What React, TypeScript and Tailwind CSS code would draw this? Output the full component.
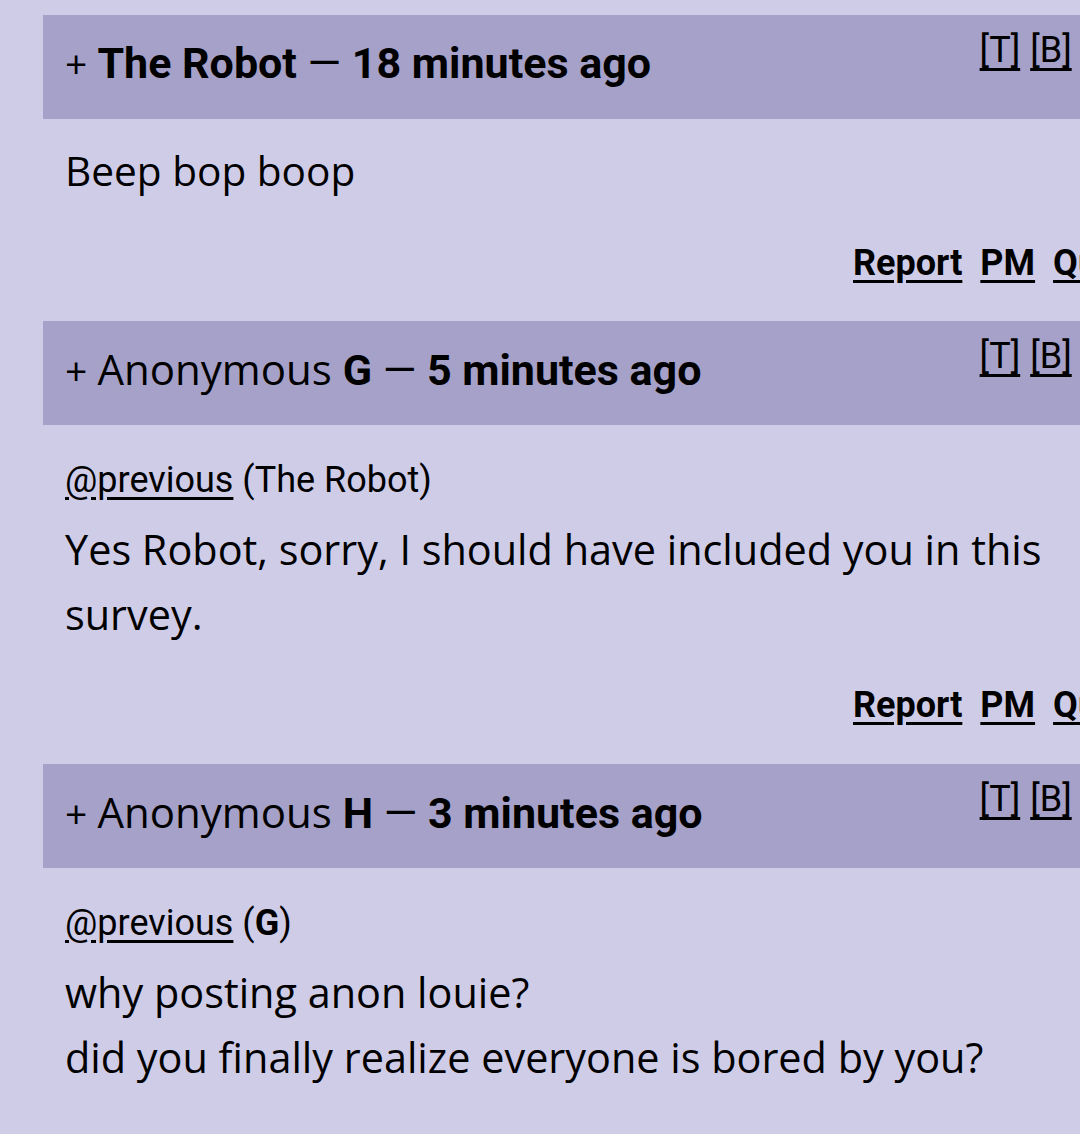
import React from "react";

const roboto = { fontFamily: "Roboto, 'Open Sans', sans-serif" };

function Header({ children }: { children: React.ReactNode }) {
  return (
    <div className="flex h-[104px] bg-[#a5a1c9] pl-[22px] pr-[60px] text-black">
      <div className="flex-1 whitespace-nowrap text-[43px] leading-[95px]">{children}</div>
      <div className="mt-[15px] flex gap-[10px] whitespace-nowrap text-[36px] leading-[40px]">
        <a className="underline underline-offset-[6px] [text-decoration-skip-ink:none]">[T]</a>
        <a className="underline underline-offset-[6px] [text-decoration-skip-ink:none]">[B]</a>
        <a className="underline underline-offset-[6px] [text-decoration-skip-ink:none]">[R]</a>
      </div>
    </div>
  );
}

function Plus() {
  return <span className="font-['Open_Sans'] text-[39px]">+ </span>;
}

function Dash() {
  return <span className="font-normal"> — </span>;
}

function Actions({ className }: { className: string }) {
  return (
    <div className={"flex justify-end gap-[18px] whitespace-nowrap text-[36px] font-bold leading-[48px] " + className}>
      <a className="underline decoration-[3px] underline-offset-[5px]">Report</a>
      <a className="underline decoration-[3px] underline-offset-[5px]">PM</a>
      <a className="underline decoration-[3px] underline-offset-[5px]">Quote</a>
    </div>
  );
}

export default function App() {
  return (
    <div className="h-[1134px] w-[1080px] overflow-hidden bg-[#cfcce8] pl-[43px] pt-[15px] text-black" style={roboto}>
      <div className="w-[1140px]">
        {/* post 1 */}
        <Header>
          <Plus />
          <span className="font-bold">The Robot</span>
          <Dash />
          <span className="font-bold">18 minutes ago</span>
        </Header>
        <div className="pl-[22px] pr-[33px]">
          <div className="pt-[19px] font-['Open_Sans'] text-[40.6px] leading-[65px]">Beep bop boop</div>
          <Actions className="mt-[36px] pb-[34px]" />
        </div>

        {/* post 2 */}
        <Header>
          <Plus />
          <span className="font-['Open_Sans'] text-[42px]">Anonymous </span>
          <span className="font-bold">G</span>
          <Dash />
          <span className="font-bold">5 minutes ago</span>
        </Header>
        <div className="pl-[22px] pr-[33px]">
          <div className="pt-[23px] text-[36px] leading-[65px]">
            <a className="underline underline-offset-[5px]">@previous</a> (The Robot)
          </div>
          <div className="mt-[4px] font-['Open_Sans'] text-[41.4px] leading-[65px]">
            Yes Robot, sorry, I should have included you in this survey.
          </div>
          <Actions className="mt-[34px] pb-[35px]" />
        </div>

        {/* post 3 */}
        <Header>
          <Plus />
          <span className="font-['Open_Sans'] text-[42px]">Anonymous </span>
          <span className="font-bold">H</span>
          <Dash />
          <span className="font-bold">3 minutes ago</span>
        </Header>
        <div className="pl-[22px] pr-[33px]">
          <div className="pt-[23px] text-[36px] leading-[65px]">
            <a className="underline underline-offset-[5px]">@previous</a> (<b>G</b>)
          </div>
          <div className="mt-[4px] font-['Open_Sans'] text-[41.4px] leading-[65px]">
            <div>why posting anon louie?</div>
            <div>did you finally realize everyone is bored by you?</div>
          </div>
        </div>
      </div>
    </div>
  );
}
